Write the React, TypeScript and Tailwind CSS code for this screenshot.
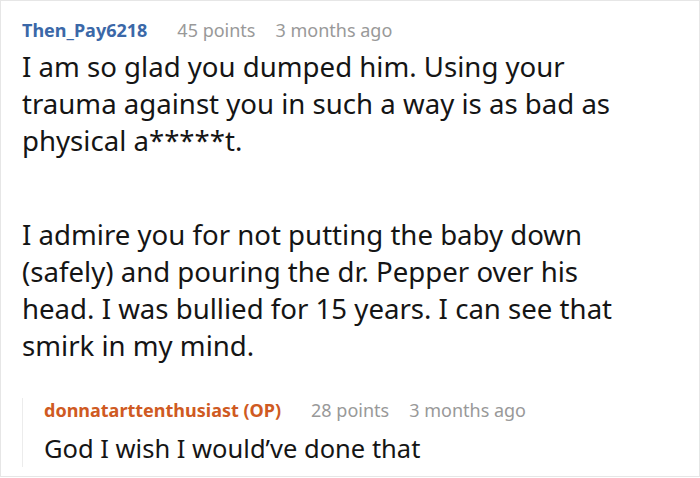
import React from "react"

const Meta = (props: { name: string; nameClass: string; points: string; time: string }) => (
  <div className="flex items-baseline text-[18px] leading-[24px]">
    <span className={`font-bold ${props.nameClass}`}>{props.name}</span>
    <span className="ml-[30px] text-[#999999]">{props.points}</span>
    <span className="ml-[20px] text-[#999999]">{props.time}</span>
  </div>
)

const App = () => {
  return (
    <div className="w-[700px] h-[478px] bg-white overflow-hidden">
      <div
        className="h-[477px] border border-[#e6e6e6] pl-[21px] pr-[52px] pt-[17px] text-[#151515]"
        style={{ fontFamily: '"Noto Sans", "Open Sans", sans-serif' }}
      >
        <Meta
          name="Then_Pay6218"
          nameClass="text-[#3b68a8]"
          points="45 points"
          time="3 months ago"
        />
        <div className="text-[27.6px] leading-[37px]">
          <p className="mt-[6px]">
            I am so glad you dumped him. Using your trauma against you in such a way is as bad as
            physical a*****t.
          </p>
          <p className="mt-[57px]">
            I admire you for not putting the baby down (safely) and pouring the dr. Pepper over his
            head. I was bullied for 15 years. I can see that smirk in my mind.
          </p>
        </div>
        <div className="mt-[34px] border-l border-[#ececec] pl-[21px]">
          <Meta
            name="donnatarttenthusiast (OP)"
            nameClass="text-[#cf5a22]"
            points="28 points"
            time="3 months ago"
          />
          <p className="text-[25.5px] leading-[37px] mt-[8px]">God I wish I would’ve done that</p>
        </div>
      </div>
    </div>
  )
}

export default App
